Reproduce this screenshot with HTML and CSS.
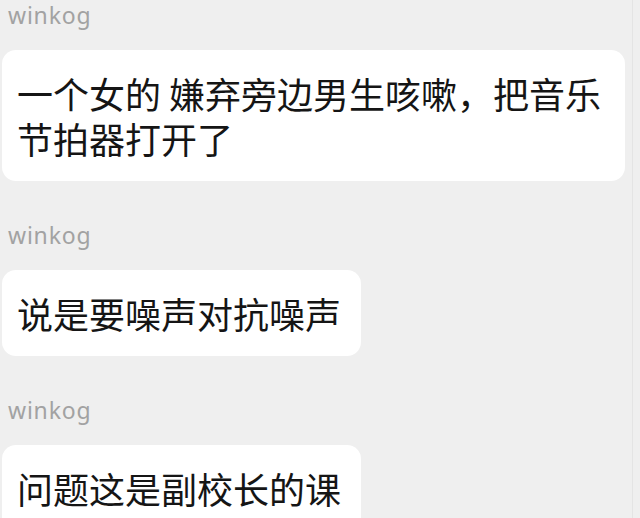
FILE: index.html
```html
<!DOCTYPE html>
<html lang="zh-CN">
<head>
    <meta charset="UTF-8">
    <meta name="viewport" content="width=device-width, initial-scale=1.0">
    <title>winkog</title>
    <link rel="stylesheet" href="styles.css">
</head>
<body>
    <div class="chat">
        <div class="message">
            <div class="sender">winkog</div>
            <div class="bubble">一个女的 嫌弃旁边男生咳嗽，把音乐节拍器打开了</div>
        </div>
        <div class="message">
            <div class="sender">winkog</div>
            <div class="bubble">说是要噪声对抗噪声</div>
        </div>
        <div class="message">
            <div class="sender">winkog</div>
            <div class="bubble">问题这是副校长的课</div>
        </div>
    </div>
</body>
</html>
```

FILE: styles.css
```css
html, body {
    margin: 0;
    height: 100%;
    background-color: #efefef;
    overflow: hidden;
}
.chat {
    width: 632px;
    height: 100%;
    border-right: 1px solid #e4e4e4;
    display: flex;
    flex-direction: column;
    gap: 39px;
}
.message {
    display: flex;
    flex-direction: column;
    align-items: flex-start;
}
.sender {
    margin-left: 8px;
    margin-bottom: 20px;
    font-family: "Noto Sans", "Noto Sans CJK SC", sans-serif;
    font-size: 23px;
    line-height: 30px;
    letter-spacing: 0.8px;
    color: #a2a2a2;
}
.bubble {
    box-sizing: border-box;
    max-width: 623px;
    margin-left: 2px;
    padding: 21px 20px 20px 15px;
    background-color: #fff;
    border-radius: 14px;
    font-family: "Noto Sans CJK SC", sans-serif;
    font-size: 36px;
    line-height: 45px;
    color: #151515;
}
```
